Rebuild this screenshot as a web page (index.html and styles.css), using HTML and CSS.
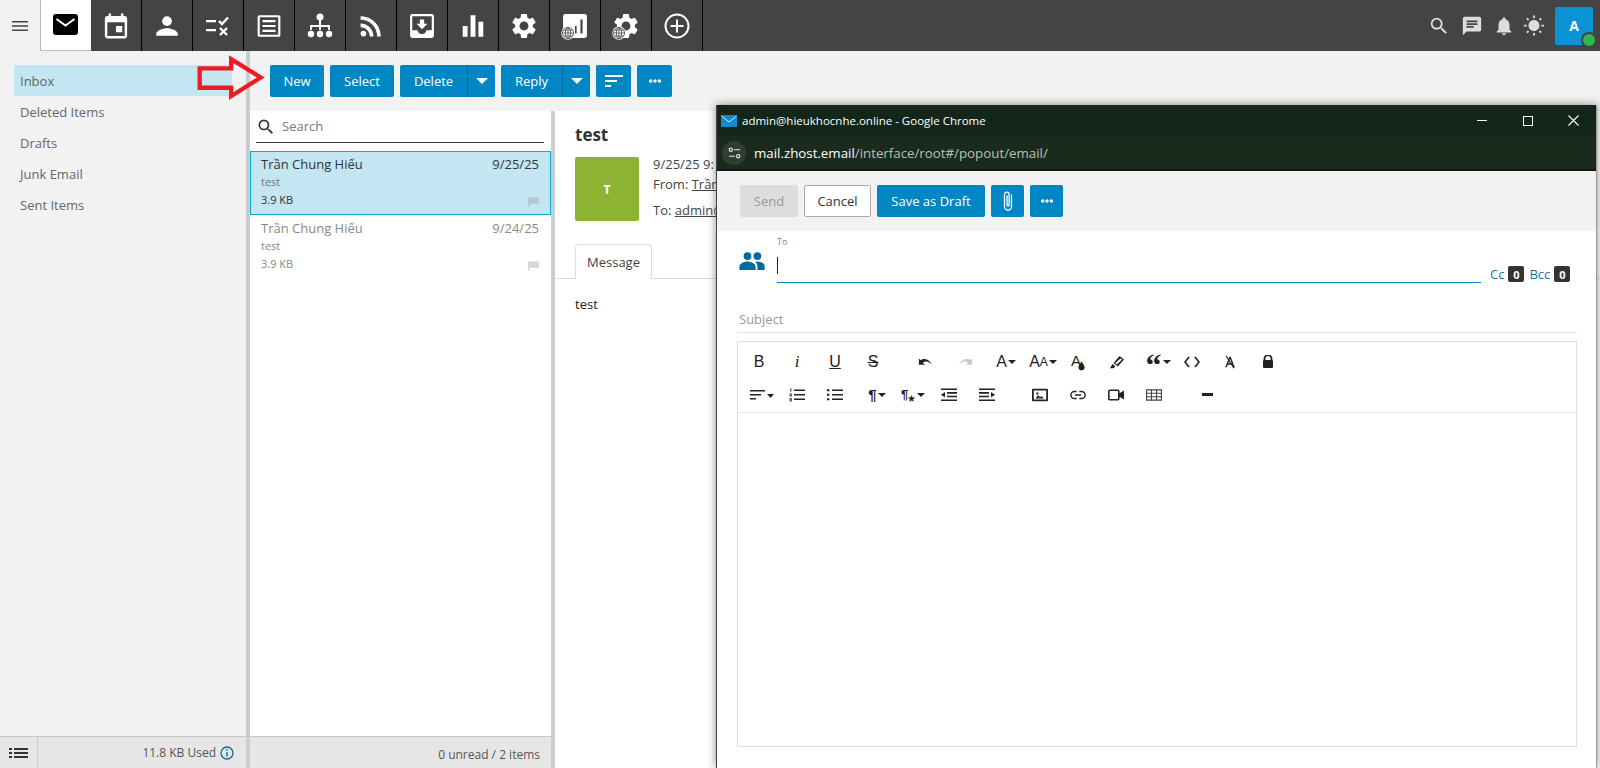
FILE: index.html
```html
<!DOCTYPE html>
<html lang="en">
<head>
<meta charset="utf-8">
<title>Mail</title>
<link rel="stylesheet" href="styles.css">
</head>
<body>
<svg class="sprite" xmlns="http://www.w3.org/2000/svg">
  <symbol id="i-gear" viewBox="1.500 1.500 21 21"><path d="M19.14 12.94c.04-.3.06-.61.06-.94 0-.32-.02-.64-.07-.94l2.03-1.58c.18-.14.23-.41.12-.61l-1.92-3.32c-.12-.22-.37-.29-.59-.22l-2.39.96c-.5-.38-1.03-.7-1.62-.94l-.36-2.54c-.04-.24-.24-.41-.48-.41h-3.84c-.24 0-.43.17-.47.41l-.36 2.54c-.59.24-1.13.57-1.62.94l-2.39-.96c-.22-.08-.47 0-.59.22L2.74 8.87c-.12.21-.08.47.12.61l2.03 1.58c-.05.3-.09.63-.09.94s.02.64.07.94l-2.03 1.58c-.18.14-.23.41-.12.61l1.92 3.32c.12.22.37.29.59.22l2.39-.96c.5.38 1.03.7 1.62.94l.36 2.54c.05.24.24.41.48.41h3.84c.24 0 .44-.17.47-.41l.36-2.54c.59-.24 1.13-.56 1.62-.94l2.39.96c.22.08.47 0 .59-.22l1.92-3.32c.12-.22.07-.47-.12-.61l-2.01-1.58zM12 15.6c-1.98 0-3.6-1.62-3.6-3.6s1.62-3.6 3.6-3.6 3.6 1.62 3.6 3.6-1.62 3.6-3.6 3.6z"/></symbol>
  <symbol id="i-globe" viewBox="0 0 24 24"><circle cx="12" cy="12" r="11.500" fill="#fff"/><g fill="none" stroke="#444" stroke-width="1.300"><circle cx="12" cy="12" r="9.500"/><ellipse cx="12" cy="12" rx="4.500" ry="9.500"/><path d="M2.500 12h19M4 7h16M4 17h16M12 2.500v19"/></g></symbol>
  <symbol id="i-search" viewBox="0 0 24 24"><path d="M15.5 14h-.79l-.28-.27A6.471 6.471 0 0 0 16 9.5 6.5 6.5 0 1 0 9.5 16c1.61 0 3.09-.59 4.23-1.57l.27.28v.79l5 4.99L20.49 19l-4.99-5zm-6 0C7.01 14 5 11.99 5 9.5S7.01 5 9.5 5 14 7.01 14 9.5 11.99 14 9.5 14z"/></symbol>
  <symbol id="i-flag" viewBox="0 0 12 11"><path d="M0 0h1.500v.500H12v7H1.500V11H0z"/></symbol>
  <symbol id="i-dots" viewBox="0 0 16 16"><circle cx="3" cy="8" r="2"/><circle cx="8" cy="8" r="2"/><circle cx="13" cy="8" r="2"/></symbol>
  <symbol id="i-caret" viewBox="0 0 10 5"><path d="M0 0h10L5 5z"/></symbol>
</svg>

<div class="app">
  <header class="topbar">
    <button class="menu-btn" aria-label="Menu">
      <svg class="ico16" viewBox="0 0 16 12"><path d="M0 1h16v1.600H0zM0 5.200h16v1.600H0zM0 9.400h16V11H0z"/></svg>
    </button>
    <nav class="apps">
      <a class="app-tab active"><svg class="ico26" viewBox="0 0 26 24"><rect y="1" width="25" height="21" rx="3" fill="#000"/><path d="M3.500 6l9 6.500 9-6.500" fill="none" stroke="#fff" stroke-width="2"/></svg></a>
      <a class="app-tab"><svg class="ico26" viewBox="2.500 1.500 19 21"><path d="M19 4h-1V2h-2v2H8V2H6v2H5a2 2 0 0 0-2 2v14a2 2 0 0 0 2 2h14a2 2 0 0 0 2-2V6a2 2 0 0 0-2-2zm0 16H5V9h14v11zM12 12h5v5h-5z"/></svg></a>
      <a class="app-tab"><svg class="ico26" viewBox="0 0 24 24"><circle cx="12" cy="7.500" r="4.500"/><path d="M2 21v-1.500C2 16 8 14 12 14s10 2 10 5.500V21z"/></svg></a>
      <a class="app-tab"><svg class="ico26" viewBox="0 0 26 24"><path d="M1 6h10v2.200H1zM1 15h10v2.200H1z"/><path d="M14 7l3 3 6-6.500M15 14l7 7M22 14l-7 7" fill="none" stroke="#fff" stroke-width="2.400"/></svg></a>
      <a class="app-tab"><svg class="ico26" viewBox="0 0 24 24"><path d="M3 2h18a1.500 1.500 0 0 1 1.500 1.500v17A1.500 1.500 0 0 1 21 22H3a1.500 1.500 0 0 1-1.500-1.500v-17A1.500 1.500 0 0 1 3 2zm.5 2v16h17V4zM6 6.500h12v2H6zM6 11h12v2H6zM6 15.500h12v2H6z" fill-rule="evenodd"/></svg></a>
      <a class="app-tab"><svg class="ico26" viewBox="0 0 26 26"><circle cx="13" cy="4" r="3.500"/><path d="M12 7h2v5h9v5h-2v-3h-7v3h-2v-3H5v3H3v-5h9z"/><circle cx="4" cy="21" r="3.200"/><circle cx="13" cy="21" r="3.200"/><circle cx="22" cy="21" r="3.200"/></svg></a>
      <a class="app-tab"><svg class="ico26" viewBox="2 2 20 20"><circle cx="6.180" cy="17.820" r="2.180"/><path d="M4 4.440v2.830c7.030 0 12.730 5.700 12.730 12.730h2.830c0-8.590-6.970-15.560-15.560-15.560zm0 5.660v2.830c3.900 0 7.070 3.170 7.070 7.070h2.830c0-5.470-4.430-9.900-9.900-9.900z"/></svg></a>
      <a class="app-tab"><svg class="ico26" viewBox="0 0 24 24"><path d="M21 1H3a2 2 0 0 0-2 2v18a2 2 0 0 0 2 2h18a2 2 0 0 0 2-2V3a2 2 0 0 0-2-2zm0 15h-5c0 2-1.800 3.500-4 3.500S8 18 8 16H3V3h18zm-4-6h-3V6h-4v4H7l5 5z"/></svg></a>
      <a class="app-tab"><svg class="ico26" viewBox="0 0 24 24"><path d="M2.500 12h4.500v10H2.500zM9.750 2h4.500v20h-4.500zM17 8h4.500v14H17z"/></svg></a>
      <a class="app-tab"><svg class="ico26"><use href="#i-gear"/></svg></a>
      <a class="app-tab"><span class="combo"><svg class="ico26" viewBox="0 0 24 24"><path d="M3 1h18a2 2 0 0 1 2 2v18a2 2 0 0 1-2 2H3a2 2 0 0 1-2-2V3a2 2 0 0 1 2-2zm9 11v7h1.500v-7zm5-6v13h2V6z" fill-rule="evenodd"/></svg><svg class="globe"><use href="#i-globe"/></svg></span></a>
      <a class="app-tab"><span class="combo"><svg class="ico26"><use href="#i-gear"/></svg><svg class="globe"><use href="#i-globe"/></svg></span></a>
      <a class="app-tab"><svg class="ico26" viewBox="0 0 26 26"><circle cx="13" cy="13" r="11.500" fill="none" stroke="#fff" stroke-width="2"/><path d="M12 6.500h2V12h5.500v2H14v5.500h-2V14H6.500v-2H12z"/></svg></a>
    </nav>
    <div class="top-right">
      <svg class="ico-top m11"><use href="#i-search"/></svg>
      <svg class="ico-top m10" viewBox="0 0 24 24"><path d="M20 2H4c-1.100 0-1.990.900-1.990 2L2 22l4-4h14c1.100 0 2-.900 2-2V4c0-1.100-.900-2-2-2zM6 9h12v2H6V9zm8 5H6v-2h8v2zm4-6H6V6h12v2z"/></svg>
      <svg class="ico-top m8" viewBox="0 0 24 24"><path d="M12 22c1.100 0 2-.900 2-2h-4c0 1.100.890 2 2 2zm6-6v-5c0-3.070-1.640-5.640-4.500-6.320V4c0-.830-.670-1.500-1.500-1.500s-1.500.670-1.500 1.500v.680C7.630 5.360 6 7.920 6 11v5l-2 2v1h16v-1l-2-2z"/></svg>
      <svg class="ico-top m10" viewBox="0 0 24 24"><path d="M6.760 4.840l-1.800-1.790-1.410 1.410 1.790 1.790 1.420-1.410zM4 10.500H1v2h3v-2zm9-9.950h-2V3.500h2V.550zm7.450 3.910l-1.410-1.410-1.790 1.790 1.410 1.410 1.790-1.790zm-3.210 13.700l1.790 1.800 1.410-1.410-1.800-1.790-1.400 1.400zM20 10.500v2h3v-2h-3zm-8-5c-3.310 0-6 2.690-6 6s2.690 6 6 6 6-2.690 6-6-2.690-6-6-6zm-1 16.950h2V19.500h-2v2.950zm-7.450-3.910l1.410 1.410 1.790-1.800-1.410-1.410-1.790 1.800z"/></svg>
      <div class="avatar-top">A<span class="presence"></span></div>
    </div>
  </header>

  <div class="main">
    <aside class="sidebar">
      <ul class="folders">
        <li class="folder selected">Inbox</li>
        <li class="folder">Deleted Items</li>
        <li class="folder">Drafts</li>
        <li class="folder">Junk Email</li>
        <li class="folder">Sent Items</li>
      </ul>
      <footer class="status side-status">
        <span class="status-menu"><svg class="ico-list" viewBox="0 0 19 12"><path d="M0 1h3v2H0zM5 1h14v2H5zM0 5h3v2H0zM5 5h14v2H5zM0 9h3v2H0zM5 9h14v2H5z"/></svg></span>
        <span class="used">11.8 KB Used</span>
        <svg class="ico-info" viewBox="0 0 14 14"><circle cx="7" cy="7" r="6" fill="none" stroke="#0a6c9e" stroke-width="1.300"/><path d="M6.300 6h1.400v4.500H6.300zM6.300 3.300h1.400v1.500H6.300z" fill="#0a6c9e"/></svg>
      </footer>
    </aside>

    <section class="content">
      <div class="mail-toolbar">
        <button class="btn w-new">New</button>
        <button class="btn w-select">Select</button>
        <div class="split"><button class="btn btn-left w-delete">Delete</button><button class="btn btn-caret"><svg class="caret"><use href="#i-caret"/></svg></button></div>
        <div class="split"><button class="btn btn-left w-reply">Reply</button><button class="btn btn-caret"><svg class="caret"><use href="#i-caret"/></svg></button></div>
        <button class="btn btn-icon"><svg class="ico-sort" viewBox="0 0 18 12"><path d="M0 0h18v2H0zM0 5h12v2H0zM0 10h6v2H0z"/></svg></button>
        <button class="btn btn-icon"><svg class="ico-dots"><use href="#i-dots"/></svg></button>
      </div>
      <div class="panes">
        <div class="list-pane">
          <div class="search">
            <svg class="ico-search"><use href="#i-search"/></svg>
            <span class="search-text">Search</span>
          </div>
          <div class="msg-rows">
            <article class="msg selected">
              <div class="msg-head"><span>Trần Chung Hiếu</span><span>9/25/25</span></div>
              <div class="msg-sub">test</div>
              <div class="msg-foot"><span>3.9 KB</span><svg class="flag"><use href="#i-flag"/></svg></div>
            </article>
            <article class="msg read">
              <div class="msg-head"><span>Trần Chung Hiếu</span><span>9/24/25</span></div>
              <div class="msg-sub">test</div>
              <div class="msg-foot"><span>3.9 KB</span><svg class="flag"><use href="#i-flag"/></svg></div>
            </article>
          </div>
          <footer class="status list-status">0 unread / 2 items</footer>
        </div>
        <div class="reader">
          <h1 class="subject">test</h1>
          <div class="meta">
            <div class="sender-badge">T</div>
            <div class="meta-lines">
              <div class="meta-date">9/25/25 9:</div>
              <div class="meta-from">From: <a class="u">Trần</a></div>
              <div class="meta-to">To: <a class="u">admin@</a></div>
            </div>
          </div>
          <div class="tabs"><span class="tab">Message</span></div>
          <div class="body-text">test</div>
        </div>
      </div>
    </section>
  </div>

  <svg class="red-arrow" viewBox="0 0 80 50"><path d="M4 14h34V4l32 20-32 20V35H4z" fill="none" stroke="#ed1c24" stroke-width="4.600" stroke-linejoin="miter"/></svg>

  <div class="popup">
    <div class="win-title">
      <svg class="win-mail" viewBox="0 0 16 12"><rect width="16" height="12" fill="#1289cf"/><path d="M.5 1L8 7l7.500-6" fill="none" stroke="#d8eefa" stroke-width="1"/></svg>
      <span class="win-text">admin@hieukhocnhe.online - Google Chrome</span>
      <div class="win-ctrls">
        <span class="win-min"></span>
        <span class="win-max"></span>
        <svg class="win-close" viewBox="0 0 11 11"><path d="M.5.500l10 10M10.500.500l-10 10" stroke="#fff" stroke-width="1.100"/></svg>
      </div>
    </div>
    <div class="win-addr">
      <span class="tune"><svg viewBox="0 0 14 12" class="tune-ico"><circle cx="3" cy="2.500" r="1.800" fill="none" stroke="#e6e6e6" stroke-width="1.200"/><path d="M6.500 2.500H13M1 9.500h6.500" stroke="#e6e6e6" stroke-width="1.200"/><circle cx="11" cy="9.500" r="1.800" fill="none" stroke="#e6e6e6" stroke-width="1.200"/></svg></span>
      <span class="url"><b class="host">mail.zhost.email</b>/interface/root#/popout/email/</span>
    </div>
    <div class="compose-bar">
      <button class="btn btn-disabled">Send</button>
      <button class="btn btn-plain">Cancel</button>
      <button class="btn w-draft">Save as Draft</button>
      <button class="btn btn-small"><svg class="ico-clip" viewBox="0 0 12 22"><path d="M9.500 5v11.500a3.500 3.500 0 0 1-7 0V4.500a2.300 2.300 0 0 1 4.600 0V15a1 1 0 0 1-2 0V6" fill="none" stroke="#fff" stroke-width="1.300" stroke-linecap="round"/></svg></button>
      <button class="btn btn-small"><svg class="ico-dots"><use href="#i-dots"/></svg></button>
    </div>
    <div class="compose">
      <div class="to-row">
        <svg class="ico-people" viewBox="0 0 28 20"><circle cx="9" cy="4.500" r="4.300"/><circle cx="20" cy="4.500" r="4.300"/><path d="M0 20v-4c0-3 5-5.500 9-5.500s9 2.500 9 5.500v4zM20 10.500c3.500 0 8 2 8 5v4.500h-8v-4c0-2-.8-3.500-2.500-5z"/></svg>
        <div class="to-field">
          <label class="to-label">To</label>
          <div class="to-input"><span class="caret-bar"></span></div>
        </div>
        <div class="cc">
          <span class="cc-link">Cc</span><span class="count">0</span>
          <span class="cc-link bcc">Bcc</span><span class="count">0</span>
        </div>
      </div>
      <div class="subject-field">Subject</div>
      <div class="editor">
        <div class="ed-toolbar">
          <div class="ed-row ed-first">
            <span class="ed"><span class="t-b">B</span></span>
            <span class="ed"><span class="t-i">i</span></span>
            <span class="ed"><span class="t-u">U</span></span>
            <span class="ed"><span class="t-s">S</span></span>
            <span class="ed g25"><svg class="e" viewBox="0 0 18 12"><path d="M1 6c3-4.500 10-5 15 3-5-4.500-8-4-10.500-2L8 9H1V2l2 2" fill="#222"/></svg></span>
            <span class="ed g11"><svg class="e" viewBox="0 0 18 12"><path d="M17 6c-3-4.500-10-5-15 3 5-4.500 8-4 10.500-2L10 9h7V2l-2 2" fill="#c8c8c8"/></svg></span>
            <span class="ed g13"><span class="t-a">A</span><svg class="car"><use href="#i-caret"/></svg></span>
            <span class="ed g9"><span class="t-a">A</span><span class="t-a2">A</span><svg class="car"><use href="#i-caret"/></svg></span>
            <span class="ed g7"><span class="t-ac">A</span><svg class="drop" viewBox="0 0 8 11"><path d="M4 0C3 2 .5 4.500.5 7a3.500 3.500 0 0 0 7 0C7.500 4.500 5 2 4 0z"/></svg></span>
            <span class="ed g11"><svg class="e" viewBox="0 0 18 16"><path d="M12 1l5 4-7 8-5-4zM13 4l-6 5 2 1.800 6-6z" fill="#222" fill-rule="evenodd"/><path d="M4 10l3 3-2 2H1z" fill="#222"/></svg></span>
            <span class="ed g13"><span class="t-q">“</span><svg class="car"><use href="#i-caret"/></svg></span>
            <span class="ed g6"><svg class="e" viewBox="0 0 16 12"><path d="M5 1L1 6l4 5M11 1l4 5-4 5" fill="none" stroke="#222" stroke-width="1.700"/></svg></span>
            <span class="ed"><svg class="e" viewBox="0 0 16 16"><path d="M7.200 2h1.600l4.700 12h-1.800L10.600 11H5.400l-1.100 3H2.500zM6 9.500h4L8 4.300z" fill="#222" fill-rule="evenodd"/><path d="M3.500 1l9 14" stroke="#222" stroke-width="1.200"/></svg></span>
            <span class="ed"><svg class="e" viewBox="0 0 12 14"><path d="M2.500 5V3.500a3.500 3.500 0 0 1 7 0V5" fill="none" stroke="#222" stroke-width="1.800"/><rect x="1" y="5" width="10" height="8" rx="1" fill="#222"/></svg></span>
          </div>
          <div class="ed-row ed-second">
            <span class="ed"><svg class="e wide" viewBox="0 0 24 10"><path d="M0 0h15v1.600H0zM0 4h11v1.600H0zM0 8h6v1.600H0z" fill="#222"/><path d="M17 4h7l-3.500 4z" fill="#222"/></svg></span>
            <span class="ed g7"><svg class="e" viewBox="0 0 16 13"><path d="M5 1h11v1.600H5zM5 5.500h11v1.600H5zM5 10h11v1.600H5z" fill="#222"/><path d="M1 0h1.500v3H1zM.5 5h2.500v3H.5zM.5 9.500h2.500V13H.5z" fill="#666"/></svg></span>
            <span class="ed"><svg class="e" viewBox="0 0 16 13"><path d="M5 1h11v1.600H5zM5 5.500h11v1.600H5zM5 10h11v1.600H5zM0 .800h2.400v2H0zM0 5.300h2.400v2H0zM0 9.800h2.400v2H0z" fill="#222"/></svg></span>
            <span class="ed g14"><span class="t-p">¶</span><svg class="car"><use href="#i-caret"/></svg></span>
            <span class="ed g8"><span class="t-p small">¶</span><span class="t-star">★</span><svg class="car"><use href="#i-caret"/></svg></span>
            <span class="ed g8"><svg class="e" viewBox="0 0 16 13"><path d="M0 0h16v1.600H0zM6 3.600h10v1.600H6zM6 7.200h10v1.600H6zM0 11h16v1.600H0zM4 3.500v5.500L0 6.200z" fill="#222"/></svg></span>
            <span class="ed"><svg class="e" viewBox="0 0 16 13"><path d="M0 0h16v1.600H0zM0 3.600h10v1.600H0zM0 7.200h10v1.600H0zM0 11h16v1.600H0zM12 3.500v5.500l4-2.800z" fill="#222"/></svg></span>
            <span class="ed g25"><svg class="e" viewBox="0 0 18 14"><path d="M1 0h16a1 1 0 0 1 1 1v12a1 1 0 0 1-1 1H1a1 1 0 0 1-1-1V1a1 1 0 0 1 1-1zm1 2v10h14V2zM4 11l3-4 2 2.500 1.500-1.500 3 3zM6 4a1.300 1.300 0 1 1-.1 0z" fill="#222" fill-rule="evenodd"/></svg></span>
            <span class="ed"><svg class="e" viewBox="0 0 18 10"><path d="M7.500 1H5a4 4 0 0 0 0 8h2.500M10.500 1H13a4 4 0 0 1 0 8h-2.500M5.500 5h7" fill="none" stroke="#222" stroke-width="1.600"/></svg></span>
            <span class="ed"><svg class="e" viewBox="0 0 16 11"><rect x=".8" y=".8" width="10" height="9.400" rx="1" fill="none" stroke="#222" stroke-width="1.600"/><path d="M11 4l5-3v9l-5-3z" fill="#222"/></svg></span>
            <span class="ed"><svg class="e" viewBox="0 0 17 12"><path d="M.6.600h15.800v10.800H.6zM.6 4.200h15.800M.6 7.800h15.800M5.800.6v10.800M11.200.6v10.800" fill="none" stroke="#444" stroke-width="1.200"/></svg></span>
            <span class="ed g25"><span class="hr"></span></span>
          </div>
        </div>
      </div>
    </div>
  </div>
</div>
</body>
</html>
```

FILE: styles.css
```css
* { box-sizing: border-box; }
html, body { margin: 0; padding: 0; height: 100%; overflow: hidden; }
body { font-family: "Open Sans", "Noto Sans", sans-serif; font-size: 13px; color: #333; background: #f2f2f2; }
.sprite { display: none; }
button { font: inherit; border: 0; padding: 0; margin: 0; cursor: pointer; }
ul { list-style: none; margin: 0; padding: 0; }

.app { position: relative; height: 768px; width: 1600px; display: flex; flex-direction: column; }

/* top bar */
.topbar { height: 51px; flex: none; display: flex; align-items: stretch; background: #444; fill: #fff; }
.menu-btn { width: 40px; background: #f2f2f2; display: flex; align-items: center; justify-content: center; fill: #444; }
.ico16 { width: 16px; height: 12px; }
.apps { display: flex; }
.app-tab { width: 51px; border-right: 1px solid #000; display: flex; align-items: center; justify-content: center; }
.app-tab.active { background: #fff; border-left: 1px solid #bbb; border-bottom: 1px solid #bbb; border-right: 0; }
.ico26 { width: 26px; height: 26px; fill: #fff; display: block; }
.combo { position: relative; display: block; width: 26px; height: 26px; }
.globe { position: absolute; left: -1px; bottom: -1px; width: 14px; height: 14px; }
.top-right { margin-left: auto; display: flex; align-items: center; padding-right: 7px; fill: #ddd; }
.ico-top { width: 22px; height: 22px; fill: #ddd; }
.m11 { margin-right: 11px; }
.m10 { margin-right: 10px; }
.m8 { margin-right: 8px; }
.avatar-top { position: relative; width: 38px; height: 38px; background: #0a93d2; border-radius: 2px; color: #fff; font-weight: 700; font-size: 14px; display: flex; align-items: center; justify-content: center; }
.presence { position: absolute; right: -2px; bottom: -1px; width: 12px; height: 12px; border-radius: 50%; background: #2fb84f; box-shadow: 0 0 0 2px #444; }

/* layout */
.main { flex: 1; min-height: 0; display: flex; }
.sidebar { width: 250px; flex: none; display: flex; flex-direction: column; border-right: 4px solid #ccc; background: #f2f2f2; }
.folders { flex: 1; padding: 14px 14px 0; }
.folder { height: 31px; line-height: 33px; padding-left: 6px; color: #666; font-size: 13px; }
.folder.selected { background: #c4e5f2; }

.status { height: 32px; flex: none; background: #e6e6e6; border-top: 1px solid #c8c8c8; display: flex; align-items: center; font-size: 12px; color: #555; }
.status-menu { width: 38px; height: 100%; border-right: 1px solid #ccc; display: flex; align-items: center; justify-content: center; }
.ico-list { width: 19px; height: 12px; fill: #333; }
.used { margin-left: auto; }
.ico-info { width: 14px; height: 14px; margin: 0 12px 0 4px; }

.content { flex: 1; min-width: 0; display: flex; flex-direction: column; }
.mail-toolbar { height: 60px; flex: none; padding: 14px 0 0 20px; display: flex; align-items: flex-start; gap: 6px; }
.btn { height: 32px; background: #0087c3; color: #fff; border-radius: 2px; padding: 0; font-size: 13px; display: inline-flex; align-items: center; justify-content: center; white-space: nowrap; }
.w-new { width: 54px; }
.w-select { width: 64px; }
.w-delete { width: 67px; }
.w-reply { width: 61px; }
.w-draft { width: 108px; }
.split { display: flex; }
.btn-left { border-radius: 2px 0 0 2px; }
.btn-caret { width: 28px; border-radius: 0 2px 2px 0; border-left: 1px solid #006b9e; }
.caret { width: 12px; height: 6px; fill: #fff; }
.btn-icon { width: 35px; }
.ico-sort { width: 18px; height: 12px; fill: #fff; }
.ico-dots { width: 14px; height: 14px; fill: #fff; }

.panes { flex: 1; min-height: 0; display: flex; }
.list-pane { width: 305px; flex: none; border-right: 4px solid #ccc; background: #fff; display: flex; flex-direction: column; }
.search { height: 32px; margin: 0 7px 8px 6px; flex: none; display: flex; align-items: center; border-bottom: 1px solid #333; }
.ico-search { width: 20px; height: 20px; fill: #333; }
.search-text { margin: -2px 0 0 6px; color: #777; font-size: 13px; }
.msg-rows { flex: 1; }
.msg { height: 64px; padding: 3px 11px 0 10px; color: #333; border: 1px solid transparent; }
.msg.selected { background: #c4e5f2; border-color: #00aed6; }
.msg.read, .msg.read .msg-sub { color: #888; }
.msg-head { display: flex; justify-content: space-between; font-size: 13px; line-height: 18px; }
.msg-sub { font-size: 11px; color: #777; line-height: 18px; }
.msg-foot { display: flex; justify-content: space-between; align-items: center; font-size: 11px; line-height: 18px; }
.flag { width: 11px; height: 10px; fill: #b4c8d2; margin-top: 3px; }
.msg.read .flag { fill: #d6d6d6; }
.list-status { justify-content: flex-end; padding: 4px 11px 0 0; }

.reader { flex: 1; background: #fff; padding: 12px 20px; min-width: 0; overflow: hidden; }
.subject { font-size: 17px; font-weight: 700; margin: 0; line-height: 24px; color: #333; }
.meta { display: flex; margin-top: 10px; }
.sender-badge { width: 64px; height: 64px; flex: none; background: #8db332; color: #fff; font-weight: 700; font-size: 13px; display: flex; align-items: center; justify-content: center; border-radius: 2px; }
.meta-lines { margin-left: 14px; color: #444; font-size: 13px; white-space: nowrap; }
.meta-date { line-height: 14px; }
.meta-from { line-height: 18px; margin-top: 4px; }
.meta-to { line-height: 18px; margin-top: 8px; }
.u { text-decoration: underline; }
.tabs { margin: 23px -20px 0; padding-left: 20px; height: 35px; border-bottom: 1px solid #ddd; }
.tab { display: inline-block; height: 35px; line-height: 35px; padding: 0 11px; border: 1px solid #ddd; border-bottom: 1px solid #fff; border-radius: 4px 4px 0 0; font-size: 13px; color: #444; background: #fff; }
.body-text { margin-top: 16px; color: #222; font-size: 13px; }

/* annotation arrow */
.red-arrow { position: absolute; left: 196px; top: 55px; width: 74px; height: 47px; overflow: visible; }

/* popup */
.popup { position: absolute; left: 716px; top: 105px; width: 881px; bottom: 0; background: #fff; border-left: 1px solid #444; border-right: 1px solid #999; display: flex; flex-direction: column; box-shadow: 0 0 9px rgba(0,0,0,.45); }
.win-title { height: 31px; flex: none; background: #12261a; color: #fff; display: flex; align-items: center; padding-left: 4px; font-size: 11.5px; }
.win-mail { width: 16px; height: 12px; margin-right: 5px; }
.win-ctrls { margin-left: auto; display: flex; align-items: center; height: 100%; }
.win-ctrls > * { display: block; }
.win-min { width: 10px; height: 1px; background: #fff; margin-right: 36px; }
.win-max { width: 10px; height: 10px; border: 1px solid #fff; margin-right: 35px; }
.win-close { width: 11px; height: 11px; margin-right: 17px; }
.win-addr { height: 35px; flex: none; background: #1a2b1e; border-bottom: 2px solid #0f1d14; display: flex; align-items: center; padding-left: 5px; font-size: 13.3px; color: #b6c2b6; }
.tune { width: 24px; height: 24px; border-radius: 50%; background: #2e3e33; display: flex; align-items: center; justify-content: center; margin-right: 8px; }
.tune-ico { width: 13px; height: 12px; }
.host { font-weight: 400; color: #fff; }
.compose-bar { height: 60px; flex: none; background: #f2f2f2; padding: 14px 0 0 23px; display: flex; align-items: flex-start; gap: 6px; }
.btn-disabled { background: #ddd; color: #999; width: 58px; }
.btn-plain { background: #fff; color: #333; border: 1px solid #aaa; width: 67px; }
.btn-small { width: 33px; }
.ico-clip { width: 12px; height: 22px; }

.compose { flex: 1; min-height: 0; background: #fff; padding: 0 19px 21px 20px; display: flex; flex-direction: column; }
.to-row { height: 52px; flex: none; display: flex; align-items: flex-end; }
.ico-people { width: 28px; height: 18px; fill: #006a9c; margin: 0 11px 13px 1px; flex: none; }
.to-field { flex: 1; display: flex; flex-direction: column; }
.to-label { font-size: 9px; color: #888; line-height: 12px; }
.to-input { height: 35px; border-bottom: 1px solid #0087c3; padding-top: 9px; }
.caret-bar { display: block; width: 1px; height: 17px; background: #222; }
.cc { width: 96px; flex: none; height: 16px; margin-bottom: 1px; padding-left: 9px; display: flex; align-items: center; font-size: 13px; color: #0a78ad; }
.cc-link { margin-right: 4px; }
.bcc { margin-left: 5px; }
.count { width: 16px; height: 16px; background: #333; color: #fff; border-radius: 2px; font-size: 11px; font-weight: 700; display: flex; align-items: center; justify-content: center; flex: none; }
.subject-field { height: 50px; flex: none; padding: 27px 0 0 2px; line-height: 18px; color: #999; font-size: 13px; border-bottom: 1px solid #ddd; }
.editor { flex: 1; min-height: 0; margin-top: 8px; border: 1px solid #ddd; }
.ed-toolbar { height: 71px; border-bottom: 1px solid #e8e8e8; padding-top: 3px; }
.ed-row { height: 33px; display: flex; align-items: center; }
.ed-first { padding-left: 7px; }
.ed-second { padding-left: 10px; }
.ed { width: 28px; height: 20px; margin-left: 10px; flex: none; display: flex; align-items: center; justify-content: center; color: #222; fill: #222; white-space: nowrap; }
.ed:first-child { margin-left: 0; }
.g6 { margin-left: 6px; } .g7 { margin-left: 7px; } .g8 { margin-left: 8px; } .g9 { margin-left: 9px; } .g11 { margin-left: 11px; } .g13 { margin-left: 13px; } .g14 { margin-left: 14px; } .g25 { margin-left: 25px; }
.e { width: 16px; height: 14px; display: block; }
.e.wide { width: 24px; height: 10px; }
.car { width: 8px; height: 4px; margin-left: 1px; fill: #222; flex: none; }
.t-b { font-family: "Liberation Sans", sans-serif; font-size: 16px; }
.t-i { font-family: "Liberation Serif", serif; font-style: italic; font-size: 17px; }
.t-u { font-family: "Liberation Sans", sans-serif; font-size: 16px; text-decoration: underline; }
.t-s { font-family: "Liberation Sans", sans-serif; font-size: 16px; text-decoration: line-through; }
.t-a { font-family: "Liberation Sans", sans-serif; font-size: 16px; }
.t-a2 { font-family: "Liberation Sans", sans-serif; font-size: 12px; }
.t-ac { font-family: "Liberation Sans", sans-serif; font-size: 15px; margin-top: -3px; }
.drop { width: 7px; height: 10px; margin: 8px 0 0 -3px; fill: #222; }
.t-q { font-family: "Liberation Serif", serif; font-weight: 700; font-size: 32px; line-height: 20px; height: 14px; }
.t-p { font-family: "Liberation Sans", sans-serif; font-size: 15px; font-weight: 700; }
.t-p.small { font-size: 13px; }
.t-star { font-size: 10px; margin: 6px 0 0 -1px; line-height: 10px; }
.hr { display: block; width: 11px; height: 3px; background: #222; }
```
